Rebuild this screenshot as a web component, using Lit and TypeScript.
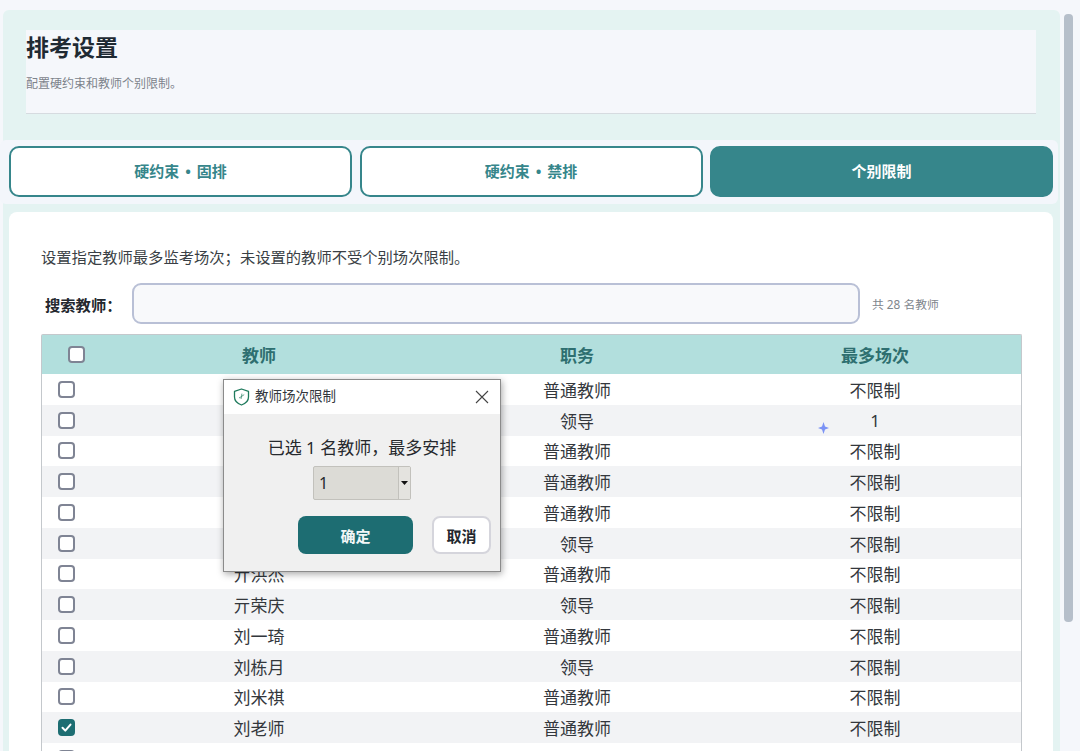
import { LitElement, html, css } from 'lit';
import { customElement } from 'lit/decorators.js';
import { classMap } from 'lit/directives/class-map.js';

// full-width punctuation
const SEMI = '\uFF1B';
const COMMA = '\uFF0C';
const COLON = '\uFF1A';

const ROWS = [
  { name: '丁一凡', role: '普通教师', max: '不限制' },
  { name: '马晓东', role: '领导', max: '1' },
  { name: '王佳宁', role: '普通教师', max: '不限制' },
  { name: '王雅琴', role: '普通教师', max: '不限制' },
  { name: '亓玉华', role: '普通教师', max: '不限制' },
  { name: '亓建国', role: '领导', max: '不限制' },
  { name: '亓洪杰', role: '普通教师', max: '不限制' },
  { name: '亓荣庆', role: '领导', max: '不限制' },
  { name: '刘一琦', role: '普通教师', max: '不限制' },
  { name: '刘栋月', role: '领导', max: '不限制' },
  { name: '刘米祺', role: '普通教师', max: '不限制' },
  { name: '刘老师', role: '普通教师', max: '不限制', checked: true },
  { name: '孙明远', role: '普通教师', max: '不限制' },
];

@customElement('app-root')
export class AppRoot extends LitElement {
  static styles = css`
    :host {
      display: block;
      font-family: 'Noto Sans', 'Noto Sans CJK SC', sans-serif;
      color: #2f3338;
    }
    .page {
      position: relative;
      display: flex;
      height: 751px;
      overflow: hidden;
      background: #f5f7fb;
    }
    .main {
      width: 1057px;
      margin: 10px 0 0 3px;
      background: #e4f3f2;
      border-radius: 6px 6px 0 0;
      flex: none;
    }
    .scroll {
      width: 9px;
      height: 608px;
      margin: 14px 0 0 4px;
      background: #b6bfca;
      border-radius: 4px;
      flex: none;
    }
    .head {
      height: 83px;
      margin: 20px 24px 0 23px;
      background: #f5f7fb;
      border-bottom: 1px solid #d6dbe0;
    }
    h1 {
      margin: 0;
      font-size: 23px;
      line-height: 34px;
      font-weight: 700;
      color: #1f2a33;
    }
    .sub {
      margin: 0;
      padding-top: 11px;
      font-size: 12px;
      line-height: 18px;
      color: #7d838b;
    }
    .tabs {
      display: grid;
      grid-template-columns: repeat(3, 343px);
      gap: 7.5px;
      width: 1058px;
      box-sizing: border-box;
      margin: 26px 0 0 -3px;
      padding: 6px 0 7px 9px;
      background: #f3f6fb;
      border-radius: 6px;
    }
    .tab {
      height: 51px;
      box-sizing: border-box;
      display: flex;
      align-items: center;
      justify-content: center;
      padding-bottom: 2px;
      border: 2px solid #36868b;
      border-radius: 10px;
      background: #fff;
      color: #36868b;
      font-size: 15px;
      font-weight: 700;
      word-spacing: 2px;
    }
    .tab.on {
      background: #36868b;
      color: #fff;
    }
    .card {
      margin: 8px 7px 0 6px;
      padding: 32px 31px 0 32px;
      height: 560px;
      background: #fff;
      border-radius: 8px 8px 0 0;
    }
    .hint {
      margin: 0;
      font-size: 15.3px;
      line-height: 26px;
      color: #3a3f45;
    }
    .search {
      display: flex;
      align-items: center;
      height: 41px;
      margin-top: 13px;
      padding-left: 4px;
    }
    .search label {
      width: 87px;
      flex: none;
      font-size: 15.3px;
      font-weight: 700;
      color: #23282e;
    }
    .search .box {
      width: 728px;
      height: 41px;
      box-sizing: border-box;
      flex: none;
      border: 2px solid #b9c0d6;
      border-radius: 9px;
      background: #f8f9fb;
    }
    .search .count {
      margin-left: 12px;
      font-size: 11.8px;
      color: #80858c;
    }
    .table {
      width: 981px;
      box-sizing: border-box;
      margin-top: 10px;
      border: 1px solid #c4c8cc;
      border-bottom: 0;
      border-radius: 2px 2px 0 0;
    }
    .row {
      display: grid;
      grid-template-columns: 51px 332px 304px 1fr;
      align-items: center;
      height: 30.75px;
      font-size: 17px;
      color: #33373c;
      text-align: center;
      background: #fff;
    }
    .row:nth-child(odd) {
      background: #f2f3f5;
    }
    .row.top {
      height: 39px;
      background: #b2dfdd;
      color: #2e6f70;
      font-weight: 700;
    }
    .row .check {
      margin-left: 16px;
    }
    .row.top .check {
      margin-left: 26px;
    }
    .check {
      width: 17px;
      height: 17px;
      box-sizing: border-box;
      border: 2px solid #7f8494;
      border-radius: 4px;
      background: #fff;
      display: flex;
      align-items: center;
      justify-content: center;
    }
    .check.on {
      border-color: #1d6d72;
      background: #1d6d72;
    }
    .check svg {
      display: block;
    }
    .spark {
      position: absolute;
      left: 818px;
      top: 422px;
    }
    .dialog {
      position: absolute;
      left: 223px;
      top: 379px;
      width: 278px;
      height: 193px;
      box-sizing: border-box;
      border: 1px solid #8b8b8b;
      background: #f0f0f0;
      box-shadow: 1px 2px 7px rgba(0, 0, 0, 0.35);
      display: flex;
      flex-direction: column;
    }
    .bar {
      display: flex;
      align-items: center;
      height: 34px;
      flex: none;
      padding: 0 11px 0 9px;
      background: #fff;
      font-size: 13.5px;
      line-height: 18px;
      color: #33373c;
    }
    .bar span {
      margin: -2px 0 0 5px;
      flex: 1;
    }
    .msg {
      margin: 0;
      padding-top: 21px;
      text-align: center;
      font-size: 17px;
      line-height: 25px;
      color: #26292d;
    }
    .combo {
      display: flex;
      width: 98px;
      height: 34px;
      box-sizing: border-box;
      margin: 6px 0 0 89px;
      border: 1px solid #c2c1bc;
      border-radius: 2px;
      background: #dcdbd6;
      font-size: 16px;
      color: #26292d;
    }
    .combo .val {
      flex: 1;
      padding-left: 5px;
      line-height: 32px;
    }
    .combo .arrow {
      width: 11px;
      border-left: 1px solid #c2c1bc;
      background: #e4e3df;
      display: flex;
      align-items: center;
      justify-content: center;
    }
    .btns {
      display: flex;
      gap: 19px;
      margin: 16px 0 0 74px;
    }
    .btn {
      height: 38px;
      box-sizing: border-box;
      display: flex;
      align-items: center;
      justify-content: center;
      border-radius: 8px;
      font-size: 15px;
      font-weight: 700;
    }
    .btn.ok {
      width: 115px;
      background: #1d6d72;
      color: #f2f7f7;
    }
    .btn.no {
      width: 59px;
      background: #fff;
      border: 2px solid #d5d5dc;
      color: #23282e;
    }
  `;

  box(on = false) {
    return html`<div class=${classMap({ check: true, on })}>
      ${on
        ? html`<svg width="13" height="13" viewBox="0 0 13 13" fill="none" stroke="#fff" stroke-width="2" stroke-linecap="round" stroke-linejoin="round"><path d="M2.5 6.8 5.3 9.6 10.5 3.6" /></svg>`
        : ''}
    </div>`;
  }

  render() {
    return html`
      <div class="page">
        <div class="main">
          <div class="head">
            <h1>排考设置</h1>
            <p class="sub">配置硬约束和教师个别限制。</p>
          </div>
          <div class="tabs">
            <div class="tab">硬约束 • 固排</div>
            <div class="tab">硬约束 • 禁排</div>
            <div class="tab on">个别限制</div>
          </div>
          <div class="card">
            <p class="hint">设置指定教师最多监考场次${SEMI}未设置的教师不受个别场次限制。</p>
            <div class="search">
              <label>搜索教师${COLON}</label>
              <div class="box"></div>
              <span class="count">共 28 名教师</span>
            </div>
            <div class="table">
              <div class="row top">
                ${this.box()}
                <div>教师</div>
                <div>职务</div>
                <div>最多场次</div>
              </div>
              ${ROWS.map(
                (r) => html`<div class="row">
                  ${this.box(!!r.checked)}
                  <div>${r.name}</div>
                  <div>${r.role}</div>
                  <div>${r.max}</div>
                </div>`
              )}
            </div>
          </div>
        </div>
        <div class="scroll"></div>

        <svg class="spark" width="11" height="12" viewBox="0 0 11 12"><path d="M5.5 0 7 4.5 11 6 7 7.5 5.5 12 4 7.5 0 6 4 4.5Z" fill="#7b92f5" /></svg>

        <div class="dialog">
          <div class="bar">
            <svg width="17" height="18" viewBox="0 0 17 18" fill="none" stroke="#1f7a5c" stroke-width="1.3" stroke-linejoin="round">
              <path d="M8.5 1 15.5 3.4V9C15.5 13 12.5 15.6 8.5 17 4.5 15.6 1.5 13 1.5 9V3.4Z" />
              <path d="M8.5 8.5 11.2 6.6M8.5 8.5 8.9 5.6M8.5 8.5 6 10M8.5 8.5 8 11" stroke-width="0.7" />
            </svg>
            <span>教师场次限制</span>
            <svg width="14" height="14" viewBox="0 0 14 14" stroke="#444" stroke-width="1.1"><path d="M1 1 13 13M13 1 1 13" /></svg>
          </div>
          <p class="msg">已选 1 名教师${COMMA}最多安排</p>
          <div class="combo">
            <div class="val">1</div>
            <div class="arrow"><svg width="7" height="4" viewBox="0 0 7 4"><path d="M0 0H7L3.5 4Z" fill="#111" /></svg></div>
          </div>
          <div class="btns">
            <div class="btn ok">确定</div>
            <div class="btn no">取消</div>
          </div>
        </div>
      </div>
    `;
  }
}
